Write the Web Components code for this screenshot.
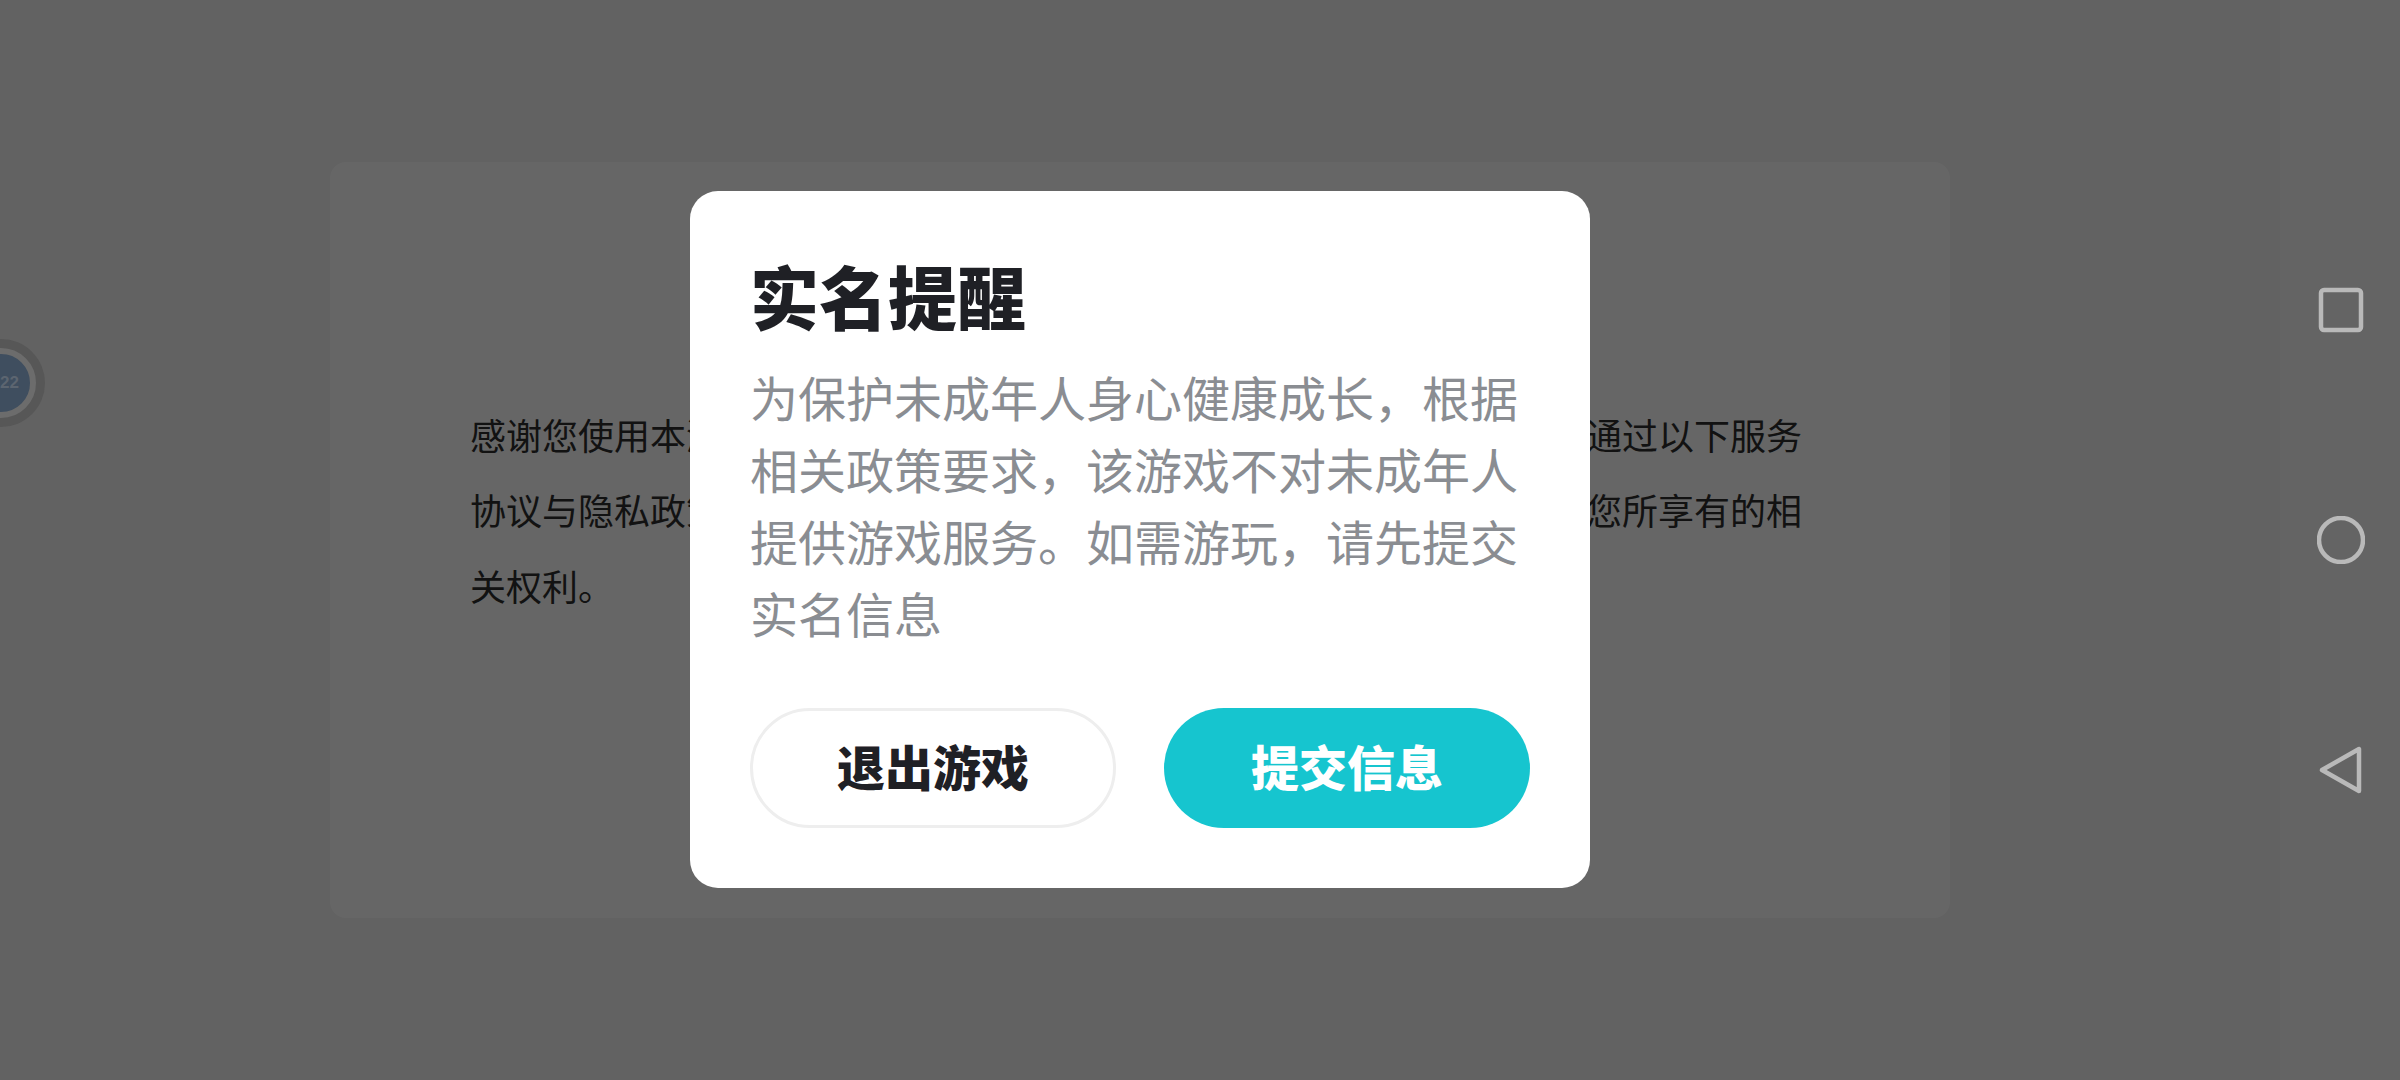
<!DOCTYPE html>
<html lang="zh-CN">
<head>
<meta charset="utf-8">
<title>实名提醒</title>
<style>
  html, body { margin: 0; height: 100%; overflow: hidden; }
  body { font-family: "Noto Sans CJK SC", "Noto Sans", sans-serif; }
</style>
</head>
<body>
<game-screen>
  <notice-card>
    感谢您使用本游戏，您在使用本游戏前应当阅读并同意相关条款，您可通过以下服务协议与隐私政策了解我们收集、使用、存储和共享个人信息情况，以及您所享有的相关权利。
  </notice-card>
  <float-ball slot="overlay" label="22"></float-ball>
  <real-name-dialog slot="overlay" heading="实名提醒">
    为保护未成年人身心健康成长，根据相关政策要求，该游戏不对未成年人提供游戏服务。如需游玩，请先提交实名信息
    <dialog-button slot="actions">退出游戏</dialog-button>
    <dialog-button slot="actions" primary>提交信息</dialog-button>
  </real-name-dialog>
</game-screen>

<script>
class GameScreen extends HTMLElement {
  constructor() {
    super();
    this.attachShadow({ mode: 'open' });
    this.shadowRoot.innerHTML = `
      <style>
        :host { display: flex; width: 2400px; height: 1080px; position: relative; overflow: hidden; }
        .stage { flex: 1; display: flex; align-items: center; justify-content: center; background: #f5f5f5; position: relative; }
        .scrim { position: absolute; inset: 0; background: rgba(0, 0, 0, .6); }
        .top { position: absolute; inset: 0; display: flex; align-items: center; justify-content: center; padding-bottom: 2px; }
      </style>
      <div class="stage">
        <slot></slot>
        <div class="scrim"></div>
        <div class="top"><slot name="overlay"></slot></div>
      </div>
      <nav-bar></nav-bar>
    `;
  }
}

class NoticeCard extends HTMLElement {
  constructor() {
    super();
    this.attachShadow({ mode: 'open' });
    this.shadowRoot.innerHTML = `
      <style>
        :host {
          display: block; box-sizing: border-box; width: 1620px; height: 756px;
          padding: 235px 148px 0 140px; background: #fff; border-radius: 16px;
          color: #2e2e2e; font-size: 36px; line-height: 75.4px;
        }
      </style>
      <slot></slot>
    `;
  }
}

class FloatBall extends HTMLElement {
  constructor() {
    super();
    this.attachShadow({ mode: 'open' });
    const label = this.getAttribute('label') || '';
    this.shadowRoot.innerHTML = `
      <style>
        :host {
          position: absolute; left: -43px; top: 339px; width: 88px; height: 88px;
          box-sizing: border-box; border-radius: 50%; background: #575757;
          display: flex; align-items: center; justify-content: center;
        }
        .ring { width: 70px; height: 70px; box-sizing: border-box; border-radius: 50%; border: 6px solid #6c6c6c;
          background: #3f4e5f; position: relative; }
        span { position: absolute; left: 28px; top: 19px; color: #5c6570; font: bold 17px "Liberation Sans", sans-serif; }
      </style>
      <div class="ring"><span>${label}</span></div>
    `;
  }
}

class RealNameDialog extends HTMLElement {
  constructor() {
    super();
    this.attachShadow({ mode: 'open' });
    const heading = this.getAttribute('heading') || '';
    this.shadowRoot.innerHTML = `
      <style>
        :host {
          display: block; box-sizing: border-box; width: 900px; height: 697px; padding: 49px 60px 60px;
          background: #fff; border-radius: 28px; position: relative;
        }
        h2 { margin: 0 0 11px; font-size: 69px; line-height: 110px; font-weight: 900; color: #1f2025; }
        .body { font-size: 48px; line-height: 72px; color: #8a8d92; height: 288px; margin-top: -1px; }
        .actions { display: grid; grid-template-columns: 1fr 1fr; gap: 48px; margin-top: 60px; }
      </style>
      <h2>${heading}</h2>
      <div class="body"><slot></slot></div>
      <div class="actions"><slot name="actions"></slot></div>
    `;
  }
}

class DialogButton extends HTMLElement {
  constructor() {
    super();
    this.attachShadow({ mode: 'open' });
    this.shadowRoot.innerHTML = `
      <style>
        :host {
          display: flex; align-items: center; justify-content: center; box-sizing: border-box; height: 120px;
          padding-bottom: 6px; border-radius: 60px; border: 3px solid #eeeeee; background: #fff; color: #1f2025;
          font-size: 48px; font-weight: 900;
        }
        :host([primary]) { border: none; background: #16c5cf; color: #fff; }
      </style>
      <slot></slot>
    `;
  }
}

class NavBar extends HTMLElement {
  constructor() {
    super();
    this.attachShadow({ mode: 'open' });
    this.shadowRoot.innerHTML = `
      <style>
        :host {
          display: flex; flex-direction: column; align-items: center; justify-content: center; gap: 182px;
          box-sizing: border-box; width: 120px; padding-left: 2px; background: #646464;
        }
        svg { display: block; width: 48px; height: 48px; fill: none; stroke: #b9b9b9; stroke-width: 4.5; stroke-linejoin: round; }
      </style>
      <svg viewBox="0 0 48 48"><rect x="4" y="4" width="40" height="40" rx="3"/></svg>
      <svg viewBox="0 0 48 48"><circle cx="24" cy="24" r="22"/></svg>
      <svg viewBox="0 0 48 48"><path d="M5 24 L42 3 V45 Z"/></svg>
    `;
  }
}

customElements.define('game-screen', GameScreen);
customElements.define('notice-card', NoticeCard);
customElements.define('float-ball', FloatBall);
customElements.define('real-name-dialog', RealNameDialog);
customElements.define('dialog-button', DialogButton);
customElements.define('nav-bar', NavBar);
</script>
</body>
</html>
